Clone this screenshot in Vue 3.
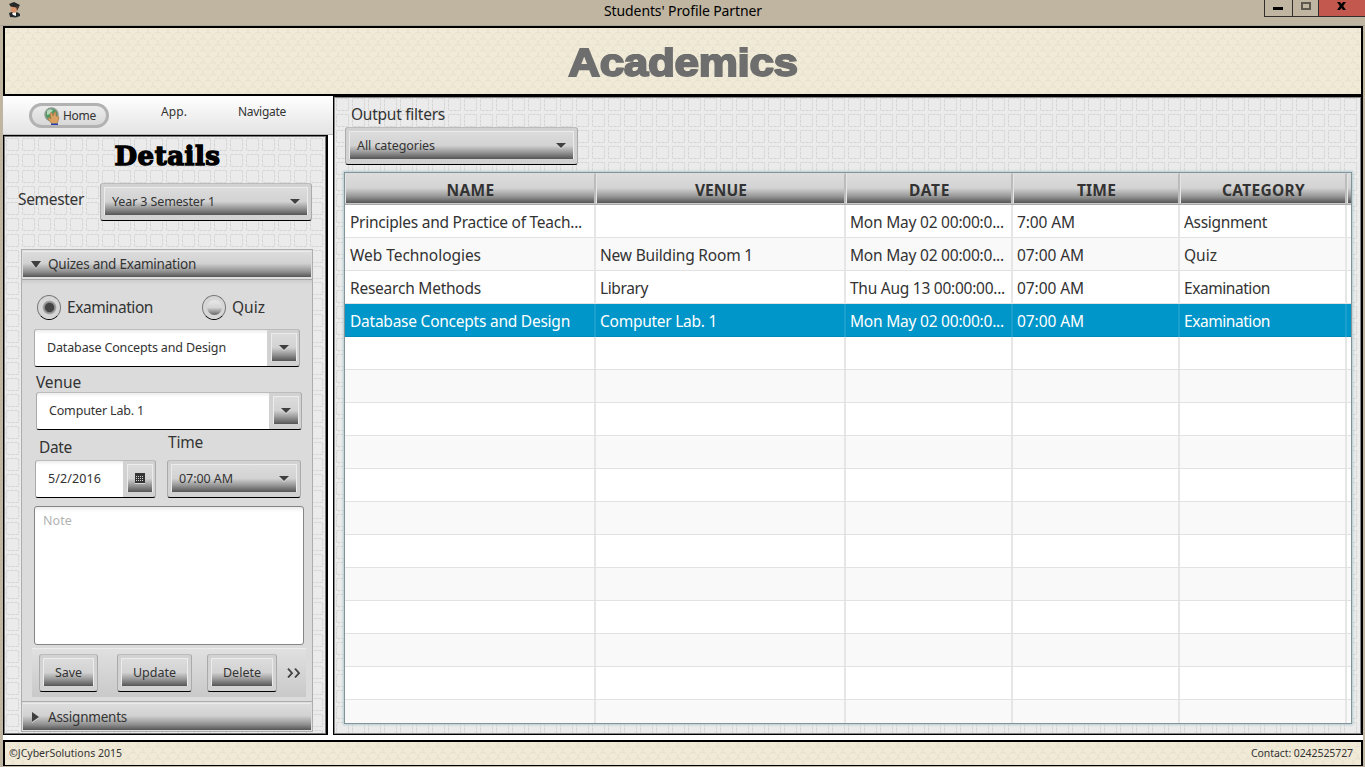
<script setup>
const columns = [
  { label: 'NAME', w: 48 },
  { label: 'VENUE', w: 52 },
  { label: 'DATE', w: 41 },
  { label: 'TIME', w: 39 },
  { label: 'CATEGORY', w: 83 }
]

const records = [
  [['Principles and Practice of Teach...', 232], null, ['Mon May 02 00:00:0...', 154], ['7:00 AM', 58], ['Assignment', 83]],
  [['Web Technologies', 131], ['New Building Room 1', 153], ['Mon May 02 00:00:0...', 154], ['07:00 AM', 67], ['Quiz', 33]],
  [['Research Methods', 131], ['Library', 48], ['Thu Aug 13 00:00:00...', 155], ['07:00 AM', 67], ['Examination', 86]],
  [['Database Concepts and Design', 220], ['Computer Lab. 1', 117], ['Mon May 02 00:00:0...', 154], ['07:00 AM', 67], ['Examination', 86]]
]
const selected = 3
const rows = Array.from({ length: 16 }, (_, i) => records[i] || [null, null, null, null, null])

// Spreads a label's letters so that it fills the given width.
const vFit = {
  mounted(el, { value }) {
    const natural = el.getBoundingClientRect().width
    el.style.letterSpacing = (value - natural) / el.textContent.length + 'px'
  }
}
</script>

<template>
  <div class="window">
    <header class="titlebar">
      <svg class="app-icon" width="13" height="16" viewBox="0 0 13 16">
        <path d="M1 2 L6 0 L12 3 L10 6 L3 5Z" fill="#272727" />
        <path d="M3 4.500 L9 6 L9 9 L7 11 L4 11 L2.500 8Z" fill="#d9946c" />
        <path d="M8 4 L11 5 L9 9Z" fill="#4c3428" />
        <path d="M1 11 L4 10 L6 12 L9 10 L12 12 L12 14 L8 15.500 L2 15Z" fill="#24292c" />
        <path d="M4 11 L8 10.500 L8 14 L5 13Z" fill="#f5f5f5" />
      </svg>
      <span class="win-title"><span v-fit="158">Students' Profile Partner</span></span>
      <div class="win-buttons">
        <div class="wb wb-min"><i></i></div>
        <div class="wb wb-max"><i></i></div>
        <div class="wb wb-close">
          <svg width="9" height="8" viewBox="0 0 9 8"><path d="M0 0H3L4.500 2L6 0H9L6.200 4L9 8H6L4.500 6L3 8H0L2.800 4Z" fill="#000" /></svg>
        </div>
      </div>
    </header>

    <div class="client">
      <div class="banner paper"><h1><span v-fit="230">Academics</span></h1></div>

      <main class="body">
        <section class="left">
          <nav class="toolbar">
            <button class="home">
              <svg width="16" height="18" viewBox="0 0 16 18">
                <circle cx="7.500" cy="7.500" r="7.200" fill="#8e9a92" />
                <circle cx="7.500" cy="7.500" r="5.700" fill="#4f9a62" />
                <path d="M3 4 Q5 1 9 3 L6 7 L3 8Z" fill="#b7d8bd" />
                <path d="M6 6.500 Q7 4.500 8.500 6.500 L9 9 L10.500 5 Q12 4 12 6 L12 9 Q15 8.500 15 11 L13 17 H8 L4 12 Q3.500 10.500 5 10.500 L7 12Z" fill="#d9a263" stroke="#a16b3c" stroke-width=".6" />
                <path d="M7 16.500H14V18H7Z" fill="#2440b4" />
              </svg>
              <span v-fit="33">Home</span>
            </button>
            <span class="menu menu-app"><span v-fit="26">App.</span></span>
            <span class="menu menu-nav"><span v-fit="48">Navigate</span></span>
          </nav>

          <div class="details grid-paper">
            <h2><span v-fit="106">Details</span></h2>
            <div class="semester">
              <label class="lbl"><span v-fit="66">Semester</span></label>
              <div class="control sem-box"><div class="bevel"><span class="small" v-fit="103">Year 3 Semester 1</span><b class="down"></b></div></div>
            </div>

            <div class="accordion">
              <div class="pane-title"><div class="pane-face"><b class="down big"></b><span v-fit="148">Quizes and Examination</span></div></div>
              <div class="pane">
                <div class="radios">
                  <span class="radio on"><i></i></span><span class="lbl r1"><span v-fit="86">Examination</span></span>
                  <span class="radio"><i></i></span><span class="lbl"><span v-fit="33">Quiz</span></span>
                </div>
                <div class="control field subject">
                  <div class="entry"><span class="small" v-fit="179">Database Concepts and Design</span></div>
                  <div class="bevel drop"><b class="down"></b></div>
                </div>
                <label class="lbl venue-label"><span v-fit="45">Venue</span></label>
                <div class="control field venue">
                  <div class="entry"><span class="small" v-fit="95">Computer Lab. 1</span></div>
                  <div class="bevel drop"><b class="down"></b></div>
                </div>
                <div class="when">
                  <div class="date-col">
                    <label class="lbl"><span v-fit="33">Date</span></label>
                    <div class="control field date">
                      <div class="entry"><span class="small" v-fit="53">5/2/2016</span></div>
                      <div class="bevel drop">
                        <svg width="10" height="11" viewBox="0 0 10 11" shape-rendering="crispEdges">
                          <path d="M0 0H10V10H0Z" fill="#353535" />
                          <path d="M1 3h1v1h-1zM3 3h1v1h-1zM5 3h1v1h-1zM7 3h1v1h-1zM1 5h1v1h-1zM3 5h1v1h-1zM5 5h1v1h-1zM7 5h1v1h-1zM1 7h1v1h-1zM3 7h1v1h-1zM5 7h1v1h-1zM7 7h1v1h-1zM0 10h10v1h-10z" fill="#d5d5d5" />
                        </svg>
                      </div>
                    </div>
                  </div>
                  <div class="time-col">
                    <label class="lbl"><span v-fit="35">Time</span></label>
                    <div class="control time"><div class="bevel"><span class="small" v-fit="54">07:00 AM</span><b class="down"></b></div></div>
                  </div>
                </div>
                <div class="note"><span class="small" v-fit="29">Note</span></div>
                <div class="actions">
                  <div class="control save"><div class="bevel mid"><span class="small" v-fit="27">Save</span></div></div>
                  <div class="control update"><div class="bevel mid"><span class="small" v-fit="43">Update</span></div></div>
                  <div class="control delete"><div class="bevel mid"><span class="small" v-fit="38">Delete</span></div></div>
                  <svg class="more" width="14" height="11" viewBox="0 0 14 11"><path d="M1 1.500L5 6L1 10.500M8 1.500L12 6L8 10.500" fill="none" stroke="#f4f4f4" stroke-width="1.600" /><path d="M1 .7L5 5.200L1 9.700M8 .7L12 5.200L8 9.700" fill="none" stroke="#444" stroke-width="1.900" /></svg>
                </div>
              </div>
              <div class="pane-title second"><div class="pane-face"><b class="right"></b><span v-fit="79">Assignments</span></div></div>
            </div>
          </div>
        </section>

        <section class="output grid-paper">
          <label class="lbl"><span v-fit="94">Output filters</span></label>
          <div class="control filter"><div class="bevel"><span class="small" v-fit="78">All categories</span><b class="down"></b></div></div>
          <div class="table">
            <div class="tr head">
              <div v-for="c in columns" :key="c.label" class="th"><span v-fit="c.w">{{ c.label }}</span></div>
              <div class="th filler"></div>
            </div>
            <div v-for="(r, i) in rows" :key="i" class="tr row" :class="{ alt: i % 2, sel: i === selected }">
              <div v-for="(cell, j) in r" :key="j" class="td"><span v-if="cell" v-fit="cell[1]">{{ cell[0] }}</span></div>
              <div class="td"></div>
            </div>
          </div>
        </section>
      </main>

      <footer class="footer paper">
        <span v-fit="113">©JCyberSolutions 2015</span>
        <span v-fit="102">Contact: 0242525727</span>
      </footer>
    </div>
  </div>
</template>

<style>
body { margin: 0; overflow: hidden; background: #bfb5a0; }
</style>

<style scoped>
* { box-sizing: border-box; }
.window {
  width: 1365px; height: 767px; overflow: hidden; background: #bfb5a0; color: #333;
  font-family: "Noto Sans", "Open Sans", sans-serif; display: flex; flex-direction: column;
}
span { white-space: nowrap; }
.window span[style] { display: inline-block; }

.titlebar { height: 26px; flex: none; display: flex; position: relative; justify-content: center; border-bottom: 1px solid #a9a699; }
.app-icon { position: absolute; left: 8px; top: 2px; }
.win-title { font-size: 14px; line-height: 22px; color: #000; padding-left: 1px; }
.win-buttons { position: absolute; right: 0; top: 0; display: flex; width: 101px; height: 17px; border: solid #2f2e2a; border-width: 0 0 1px 1px; }
.wb { border-right: 1px solid #2f2e2a; display: flex; justify-content: center; align-items: flex-start; }
.wb-min { width: 28px; }
.wb-min i { width: 10px; height: 3px; background: #000; margin: 7px 2px 0 0; }
.wb-max { width: 26px; }
.wb-max i { width: 10px; height: 8px; border: 2px solid #5d594e; margin-top: 2px; }
.wb-close { flex: 1; background: #c2584e; border-right: 0; }
.wb-close svg { margin: 2px 2px 0 0; }

.client { margin: 0 2px 1px 3px; flex: 1; display: flex; flex-direction: column; background: #fff; min-height: 0; }
.paper {
  background-color: #f1ead6;
  background-image: url("data:image/svg+xml,%3Csvg xmlns='http://www.w3.org/2000/svg' width='10' height='12'%3E%3Cg fill='none' stroke='%23e7e1cf' stroke-width='1.300'%3E%3Cpath d='M3 0V4M0 5.500L3 4L6 5.500M8 6V10M5 11.500L8 10L10 11M0 11L1 11.500'/%3E%3C/g%3E%3C/svg%3E");
}
.banner { height: 70px; flex: none; border: 2px solid #000; display: flex; justify-content: center; align-items: center; }
h1 {
  margin: 4px 0 0 0; font: 700 38px/44px "Liberation Sans", Arial, sans-serif; color: #6e6e6e;
  -webkit-text-stroke: 1.8px #6e6e6e; transform: scaleX(1.16); text-shadow: 0 -.6px 0 #444;
}

.body { height: 639px; flex: none; display: flex; }
.left { width: 330px; display: flex; flex-direction: column; }
.toolbar { height: 39px; background: linear-gradient(#fff, #e4e4e4); border-bottom: 1px solid #bbb; display: flex; padding-left: 26px; font-size: 12px; }
.home {
  width: 80px; height: 25px; margin: 7px 0 0; padding: 0 0 0 12px; border: 3px solid #b2b2b2; border-radius: 13px;
  background: linear-gradient(#ececec, #d8d8d8); display: flex; align-items: center; gap: 3px; color: #333; font: 12px "Noto Sans", sans-serif;
}
.menu { line-height: 16px; margin-top: 8px; }
.menu-app { margin-left: 52px; width: 77px; }

.grid-paper {
  background-color: #ebebeb;
  background-image: url("data:image/svg+xml,%3Csvg xmlns='http://www.w3.org/2000/svg' width='16' height='16'%3E%3Crect x='.5' y='.5' width='12' height='12' fill='none' stroke='%23d5d5d5' stroke-dasharray='3 1'/%3E%3C/svg%3E");
}
.details { width: 325px; height: 600px; border: 1px solid #000; border-right-width: 2px; box-shadow: inset 0 0 0 1px #777; background-position: 2px 2px; }
h2 { margin: 4px 0 0 5px; text-align: center; font: 900 26px/33px "DejaVu Serif", serif; color: #000; -webkit-text-stroke: 1.4px #000; }
.lbl { font-size: 15.5px; line-height: 18px; padding-bottom: 2px; display: block; }
.pane .lbl { line-height: 20px; padding-bottom: 0; }
.small { font-size: 12.5px; }
.semester { display: flex; margin-top: 10px; padding-left: 14px; }
.semester .lbl { width: 82px; margin-top: 7px; }

.control {
  height: 38px; background: #d2d2d2; border-radius: 3px; padding: 4px 3px 5px; display: flex;
  border: solid; border-width: 0 1px 1px; border-color: transparent #aaa #000; box-shadow: inset 0 1px 0 #bcbcbc;
}
.bevel {
  flex: 1; height: 28px; display: flex; align-items: center; justify-content: space-between; padding: 0 7px 0 7px;
  border: 1px solid #ececec; border-bottom: 0; border-radius: 1px;
  background: linear-gradient(#dcdcdc, #d2d2d2 50%, #9a9a9a 74%, #555);
}
.bevel.mid { justify-content: center; padding: 0; }
.drop { flex: none; width: 26px; padding: 0; justify-content: center; }
.down { width: 0; height: 0; border: solid transparent; border-width: 5px 5px 0; border-top-color: #3f3f3f; filter: drop-shadow(0 1px 0 #ddd); }
.down.big { border-width: 7px 5px 0; }
.right { width: 0; height: 0; margin: 0 2px 0 1px; border: solid transparent; border-width: 5px 0 5px 7px; border-left-color: #3f3f3f; filter: drop-shadow(0 1px 0 #ddd); }
.sem-box { width: 212px; }

.accordion { width: 292px; height: 483px; margin: 28px 0 0 17px; border: 1px solid #adadad; background: #dbdbdb; display: flex; flex-direction: column; }
.pane-title { height: 30px; flex: none; padding: 1px 1px 2px; background: #dedede; border-bottom: 1px solid #a6a6a6; }
.pane-title.second { height: 30px; border-top: 1px solid #adadad; border-bottom: 0; padding-bottom: 1px; }
.pane-face { height: 26px; display: flex; align-items: center; padding: 0 0 1px 8px; gap: 7px; font-size: 13.5px; border-top: 1px solid #ebebeb; background: linear-gradient(#dcdcdc, #d2d2d2 45%, #8d8d8d 80%, #555); }
.second .pane-face { height: 27px; padding-bottom: 0; }
.pane { height: 421px; flex: none; padding: 0 0 0 12px; background: linear-gradient(#cdcdcd, #dbdbdb 5px); }
.radios { height: 26px; margin: 14px 0 0 3px; display: flex; align-items: center; }
.radios .lbl { margin-left: 6px; margin-top: -1px; }
.radios .r1 { width: 135px; }
.radio { width: 24px; height: 25px; border-radius: 50%; border: 1px solid #777; border-bottom-color: #000; background: #d6d6d6; display: flex; align-items: center; justify-content: center; flex: none; }
.radio i { width: 15px; height: 15px; border-radius: 50%; background: linear-gradient(#e9e9e9, #d5d5d5 50%, #666); }
.radio.on i { background: radial-gradient(#444 4.200px, #858585 5px, #aaa 6.500px, #ddd 7.500px); }
.field { padding: 0 2px 0 0; }
.field .drop { margin-top: 4px; }
.entry { flex: 1; height: 36px; margin-top: 1px; background: linear-gradient(#ececec, #fff 4px); padding-left: 12px; line-height: 33px; margin-right: 4px; border-radius: 2px 0 0 2px; }
.subject { width: 266px; margin-top: 9px; }
.venue-label { margin: 5px 0 0 2px; }
.venue { width: 266px; margin: 0 0 0 2px; }
.when { display: flex; height: 68px; margin-left: 1px; }
.date-col { width: 132px; padding-top: 7px; }
.date-col .lbl { padding-left: 4px; }
.date { width: 121px; margin-top: 3px; }
.time-col .lbl { margin: 2px 0 8px 1px; }
.time { width: 134px; }
.note { width: 270px; height: 139px; margin-top: 8px; border: 1px solid #858585; border-radius: 3px; background: linear-gradient(#ececec, #fff 5px); color: #b2b2b2; padding: 4px 8px; line-height: 20px; font-size: 12.5px; }
.actions { width: 274px; height: 49px; margin: 3px 0 0 -2px; padding: 6px 0 0 7px; display: flex; border-top: 1px solid #ececec; background: linear-gradient(#e0e0e0, #c9c9c9); }
.actions .control { margin-top: -1px; }
.save { width: 59px; margin-right: 19px; }
.update { width: 75px; margin-right: 15px; }
.delete { width: 70px; margin-right: 10px; }
.more { margin-top: 13px; }

.output { width: 1030px; height: 639px; border: 1px solid #000; border-right-width: 2px; box-shadow: inset 0 0 0 1px #888; background-position: 2px 1px; padding: 8px 0 0 10px; }
.output > .lbl { margin-left: 7px; }
.filter { width: 233px; height: 38px; margin: 2px 0 0 1px; }
.table { width: 1008px; height: 552px; margin-top: 7px; border: 1px solid #849398; box-shadow: 0 0 2px 1px #b5cbd0; overflow: hidden; background: #fff; }
.tr { display: grid; grid-template-columns: 251px 250px 167px 167px 167px 1fr; }
.head { height: 32px; background: #c9c9c9; padding-bottom: 1px; border-bottom: 1px solid #aaa; }
.th {
  display: flex; align-items: center; justify-content: center; font-size: 15.5px; font-weight: 700; padding: 3px 0 0 1px;
  border: 1px solid #ddd; border-left-color: #e5e5e5; border-right: 2px solid #bcbcbc; border-bottom: 0;
  background: linear-gradient(#dcdcdc, #d3d3d3 48%, #959595 78%, #555);
}
.filler { border-right: 0; }
.row { height: 33px; font-size: 15.5px; border-bottom: 1px solid #e2e2e2; line-height: 34px; background: #fff; }
.td { border-right: 2px solid #e6e6e6; padding-left: 4px; }
.td:first-child { padding-left: 5px; }
.td:last-child { border-right: 0; }
.row.alt { background: #f9f9f9; }
.row.sel { background: #0096c9; color: #fff; border-bottom-color: #0089b9; }
.row.sel .td { border-right-color: #1b9fcd; }

.footer { height: 26px; flex: none; margin-top: 5px; border: 2px solid #000; border-bottom-width: 1px; padding: 0 8px 1px 4px; display: flex; justify-content: space-between; align-items: center; font-size: 10.5px; }
</style>
